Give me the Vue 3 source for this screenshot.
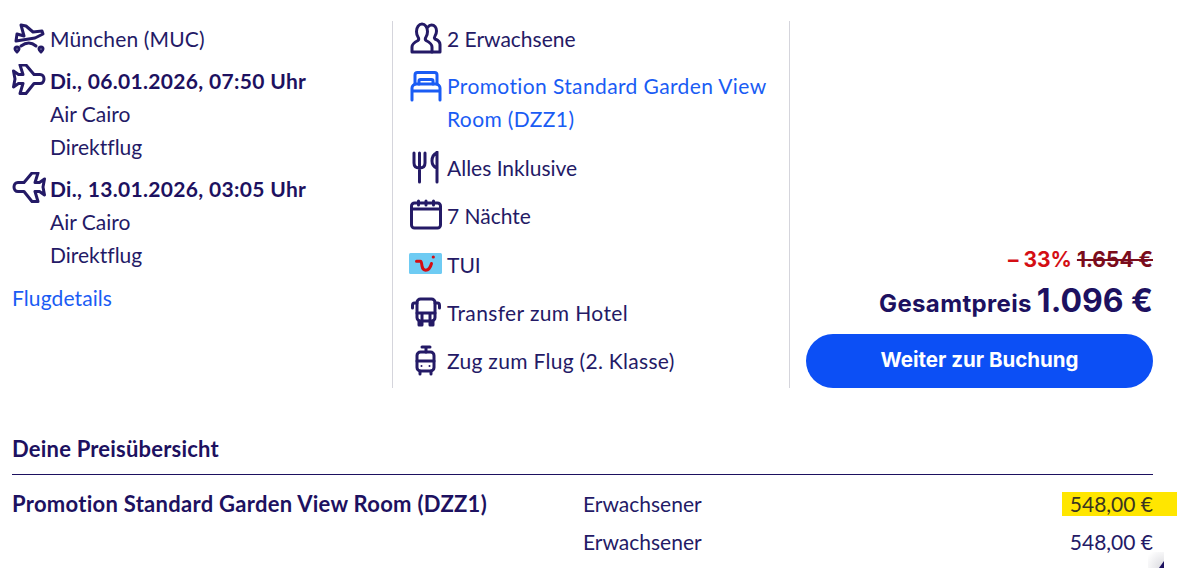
<template>
  <div class="page">
    <div class="summary">
      <!-- Flug -->
      <div class="col col-flight">
        <div class="row">
          <svg class="ico" viewBox="0 0 34 34"><path d="M5 12l7 2L9 3l5 1 7 6 9-1 1 3-8 4-19 3z" /><path d="M9 24q8-6 15 0" /><path d="M3 27a2 2 0 1 1 4 0c0 1-2 3-2 3s-2-2-2-3zM27 27a2 2 0 1 1 4 0c0 1-2 3-2 3s-2-2-2-3z" /></svg>
          <span class="wide-s">München (MUC)</span>
        </div>
        <div class="leg" v-for="leg in legs" :key="leg.date">
          <div class="row">
            <svg class="ico" :class="{ back: leg.back }" viewBox="0 0 34 34"><path d="M8 1h6l8 9.500h6c2.500 0 4 2 4 4.500s-1.500 4.500-4 4.500h-6L14 29.500H8l3-10H6.500L1.500 23 3 15 1.500 7l5 3.500H11z" /></svg>
            <strong class="date">{{ leg.date }}</strong>
          </div>
          <div class="sub">Air Cairo</div>
          <div class="sub">Direktflug</div>
        </div>
        <a class="link details">Flugdetails</a>
      </div>

      <!-- Leistungen -->
      <div class="col col-services">
        <div class="service">
          <svg class="ico" viewBox="0 0 34 34"><path d="M2 30v-5c0-3.500 3-5 6-6.500 1-1 1-2 0-3.500-1-1.500-1.500-3-1.500-5.500C6.500 5 9 2 12 2s5.500 3 5.500 7.500c0 2.500-.5 4-1.500 5.500-1 1.500-1 2.500 0 3.500 3 1.500 6 3 6 6.500v5z" /><path d="M18 5c1-1.500 2-2 3.500-2 3 0 5 2.500 5 6 0 2-.5 3.500-1.500 5-.8 1.200-.8 2 0 3 2.500 1 5 2 5 5.500V30h-8" /></svg>
          <span>2 Erwachsene</span>
        </div>
        <div class="service blue two-line">
          <svg class="ico" viewBox="0 0 34 34"><path d="M5 14V5c0-1.500 1-2.500 2.500-2.500h17C26 2.500 27 3.500 27 5v9" /><path d="M9 14v-3c0-1 .5-1.500 1.500-1.500h11c1 0 1.500.5 1.500 1.500v3" /><path d="M2 21v-3c0-2 2-4 4-4h20c2 0 4 2 4 4v3zM2 21v9M30 21v9" /></svg>
          <span class="wide">Promotion Standard Garden View Room (DZZ1)</span>
        </div>
        <div class="service">
          <svg class="ico" viewBox="0 0 34 34"><path d="M4 2v10c0 3 2 5 5.500 5s5.500-2 5.500-5V2M9.500 2v29M27 1v30M27 2c-3 1-5 4-5 8s2 6 5 7" /></svg>
          <span>Alles Inklusive</span>
        </div>
        <div class="service">
          <svg class="ico" viewBox="0 0 34 34"><rect x="1.500" y="4" width="29" height="25" rx="3" /><path d="M1.500 10h29M8.500 2v4M16 2v4M23.500 2v4" /></svg>
          <span>7 Nächte</span>
        </div>
        <div class="service">
          <svg class="tui" viewBox="0 0 33 21"><rect width="33" height="21" rx="1.500" fill="#6ecbf3" /><path d="M7.500 8.300h4c1 0 1 1.700 1.500 4.700.5 3 2 4.200 3.700 4.200 2.800 0 4.800-3 5.800-6.700" fill="none" stroke="#d40e14" stroke-width="3" stroke-linecap="round" stroke-linejoin="round" /><circle cx="24.300" cy="4" r="1.600" fill="#d40e14" /></svg>
          <span>TUI</span>
        </div>
        <div class="service">
          <svg class="ico" viewBox="0 0 34 34"><rect x="7" y="3" width="18" height="22" rx="3.500" /><path d="M7 7H4.500C3 7 2.500 8 2.500 9.500V12M25 7h2.500c1.500 0 2 1 2 2.500V12M7 17h18M12 17v8M20 17v8M9 25v4h3v-4M20 25v4h3v-4" /></svg>
          <span class="wide">Transfer zum Hotel</span>
        </div>
        <div class="service">
          <svg class="ico" viewBox="0 0 34 34"><rect x="7" y="8" width="17" height="19" rx="3.500" /><path d="M12 3h8M16 3v5M7 17h17M10 27v3M21 27v3" /><circle class="dot" cx="11.500" cy="22" r="1" /><circle class="dot" cx="19.500" cy="22" r="1" /></svg>
          <span class="wide-m">Zug zum Flug (2. Klasse)</span>
        </div>
      </div>

      <!-- Preis -->
      <div class="col-price">
        <div class="discount"><span class="pct">– 33%</span> <s>1.654 €</s></div>
        <div class="total"><span class="total-label">Gesamtpreis</span> <span class="total-value">1.096 €</span></div>
        <button class="cta">Weiter zur Buchung</button>
      </div>
    </div>

    <!-- Preisübersicht -->
    <section class="overview">
      <h3>Deine Preisübersicht</h3>
      <div class="price-row" v-for="(r, i) in priceRows" :key="i">
        <strong class="room">{{ r.room }}</strong>
        <span class="who">Erwachsener</span>
        <span class="amount"><mark v-if="r.marked">548,00 €</mark><template v-else>548,00 €</template></span>
      </div>
    </section>
    <div class="corner-shade"></div>
    <div class="corner"></div>
  </div>
</template>

<script setup>
const legs = [
  { date: 'Di., 06.01.2026, 07:50 Uhr', back: false },
  { date: 'Di., 13.01.2026, 03:05 Uhr', back: true },
]

const priceRows = [
  { room: 'Promotion Standard Garden View Room (DZZ1)', marked: true },
  { room: '', marked: false },
]
</script>

<style>
html, body { background: #fff; overflow: hidden; }
</style>

<style scoped>
.page {
  width: 1177px;
  height: 568px;
  overflow: hidden;
  position: relative;
  padding: 21px 24px 0 12px;
  box-sizing: border-box;
  font-family: Lato, "Noto Sans", sans-serif;
  font-size: 21px;
  line-height: 33px;
  color: #241a66;
  font-variant-ligatures: none;
}

.summary {
  display: grid;
  grid-template-columns: 381px 397px 1fr;
  height: 367px;
}

.col { border-right: 1px solid #d5d5dc; }

.ico {
  width: 34px;
  height: 34px;
  margin-bottom: -1px;
  flex: none;
  fill: none;
  stroke: currentColor;
  stroke-width: 3;
  stroke-linejoin: round;
  stroke-linecap: round;
}

.dot { fill: currentColor; stroke: none; }

.row {
  display: flex;
  align-items: center;
  gap: 4px;
  height: 33px;
}

.col-flight { padding-top: 1px; }
.leg { margin-top: 9px; }
.sub { padding-left: 38px; }
.back { transform: scaleX(-1); }
.date { color: #1d1160; letter-spacing: .32px; }
.wide-s { letter-spacing: .15px; }
.wide-m { letter-spacing: .3px; }
.wide { letter-spacing: .38px; }

.details { display: block; margin-top: 10px; letter-spacing: .1px; }
.link, .blue { color: #1a5cf4; }

.col-services {
  padding: 1px 0 0 17px;
  display: flex;
  flex-direction: column;
  gap: 15.400px;
}

.service {
  display: flex;
  gap: 3px;
  align-items: flex-start;
}

.two-line { line-height: 32.500px; }

.tui {
  width: 33px;
  height: 21px;
  margin: 5px 2px 0 -1px;
  flex: none;
}

.col-price {
  padding: 0 0 0 16px;
  display: flex;
  flex-direction: column;
  align-items: flex-end;
  justify-content: flex-end;
  font-family: Inter, Lato, sans-serif;
  color: #1d1160;
}

.discount {
  font-size: 21px;
  font-weight: 700;
  line-height: 26px;
  color: #d40e14;
  margin-bottom: 8px;
}

.discount s { color: #7a0c1c; }

.total {
  font-weight: 700;
  line-height: 40px;
  margin-bottom: 9px;
}

.total-label { font-size: 24px; letter-spacing: .35px; }
.total-value { font-size: 32px; }

.cta {
  width: 100%;
  height: 54px;
  padding-bottom: 4px;
  border: none;
  border-radius: 27px;
  background: #0c4ff5;
  color: #fff;
  font: 700 20.500px Inter, Lato, sans-serif;
}

.overview { margin-top: 44px; }

.overview h3 {
  margin: 0;
  font-size: 22px;
  font-weight: 700;
  line-height: 33px;
  padding-bottom: 9px;
  border-bottom: 1px solid #1d1160;
  letter-spacing: .2px;
  color: #1d1160;
}

.price-row {
  display: grid;
  grid-template-columns: 571px 1fr auto;
  height: 38px;
  align-items: center;
}

.price-row:first-of-type { margin-top: 9px; }

.room {
  font-size: 22px;
  font-weight: 700;
  letter-spacing: .28px;
  color: #1d1160;
}

.amount mark {
  background: #ffe600;
  color: #3a3520;
  padding: 0 24px 0 8px;
  margin-right: -24px;
  display: inline-block;
  line-height: 24px;
}

/* Rest eines Overlays am Rand der Aufnahme */
.corner-shade {
  position: absolute;
  right: 13px;
  bottom: 0;
  width: 16px;
  height: 16px;
  background: radial-gradient(circle at 100% 100%, #d9d9de 0, #fff 90%);
}

.corner {
  position: absolute;
  right: 13px;
  bottom: 0;
  width: 5px;
  height: 7px;
  background: #1d1160;
  clip-path: polygon(100% 0, 100% 100%, 0 100%);
}
</style>
